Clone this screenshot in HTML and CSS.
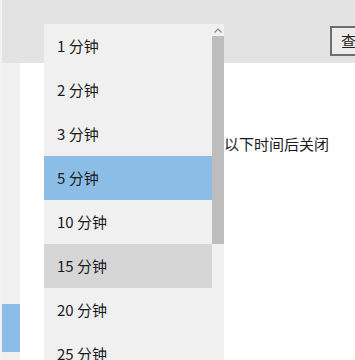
FILE: index.html
```html
<!DOCTYPE html>
<html>
<head>
<meta charset="utf-8">
<link rel="stylesheet" href="styles.css">
</head>
<body>
<div class="app">
  <div class="topbar">
    <button class="btn">查看</button>
  </div>
  <div class="main">
    <div class="sidebar"><div class="side-sel"></div></div>
    <div class="content">
      <div class="label">以下时间后关闭</div>
    </div>
  </div>
</div>
<div class="dropdown">
  <ul class="list">
    <li>1 分钟</li>
    <li>2 分钟</li>
    <li>3 分钟</li>
    <li class="sel">5 分钟</li>
    <li>10 分钟</li>
    <li class="hover">15 分钟</li>
    <li>20 分钟</li>
    <li>25 分钟</li>
  </ul>
  <div class="scroll">
    <div class="arrow">
      <svg width="8" height="5" viewBox="0 0 8 5"><path d="M0.5 4.5 L4 1 L7.5 4.5" fill="none" stroke="#888" stroke-width="1.2"/></svg>
    </div>
    <div class="thumb"></div>
  </div>
</div>
</body>
</html>
```
FILE: styles.css
```css
html, body {
  margin: 0;
  padding: 0;
  width: 355px;
  height: 360px;
  overflow: hidden;
  background: #fff;
  font-family: "Noto Sans CJK SC", "Open Sans", sans-serif;
  color: #1a1a1a;
}
.app {
  display: flex;
  flex-direction: column;
  height: 360px;
  border-left: 2px solid #f2f2f2;
  overflow: hidden;
}
.topbar {
  height: 63px;
  background: #e3e3e3;
  display: flex;
  justify-content: flex-end;
  align-items: flex-start;
  padding-top: 26px;
  box-sizing: border-box;
  flex-shrink: 0;
  overflow: hidden;
}
.btn {
  margin-right: -42px;
  width: 67px;
  height: 30px;
  flex-shrink: 0;
  border: 2px solid #6e6e6e;
  background: #ececec;
  font-family: "Noto Sans CJK SC", sans-serif;
  font-size: 15px;
  color: #222;
  padding: 0 0 0 9px;
  text-align: left;
  line-height: 24px;
}
.main {
  flex: 1;
  display: flex;
}
.sidebar {
  width: 18px;
  background: #f0f0f0;
  padding-top: 241px;
  box-sizing: border-box;
}
.side-sel {
  height: 48px;
  background: #8bbde6;
}
.content {
  flex: 1;
  padding-top: 70px;
  padding-left: 204px;
}
.label {
  font-size: 15px;
  line-height: 22px;
  white-space: nowrap;
}
.dropdown {
  position: absolute;
  left: 44px;
  top: 24px;
  width: 180px;
  height: 336px;
  background: #f0f0f0;
  display: flex;
  overflow: hidden;
}
.list {
  list-style: none;
  margin: 0;
  padding: 0;
  width: 168px;
}
.list li {
  height: 44px;
  line-height: 44px;
  padding-left: 13px;
  font-size: 15px;
  color: #1a1a1a;
}
.list li.sel {
  background: #8bbde6;
}
.list li.hover {
  background: #d6d6d6;
}
.scroll {
  width: 12px;
  display: flex;
  flex-direction: column;
}
.arrow {
  height: 12px;
  display: flex;
  justify-content: center;
  align-items: center;
}
.thumb {
  height: 208px;
  background: #bdbdbd;
}
```
